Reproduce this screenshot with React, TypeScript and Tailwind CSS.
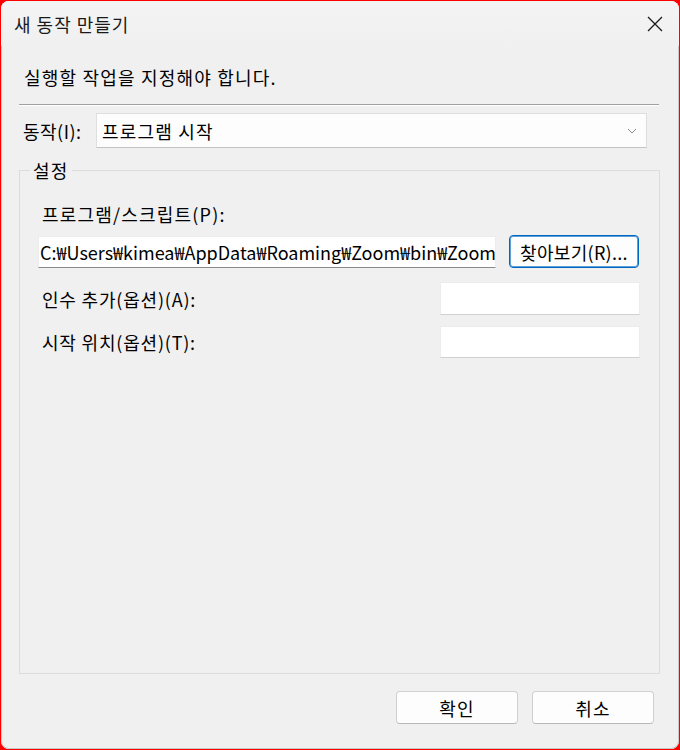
import React from "react";

const font = "font-['Malgun_Gothic','Noto_Sans_CJK_KR',sans-serif]";

function Chevron() {
  return (
    <svg width="10" height="6" viewBox="0 0 10 6" fill="none">
      <path d="M1 1L5 5L9 1" stroke="#8a8a8a" strokeWidth="1" />
    </svg>
  );
}

function CloseIcon() {
  return (
    <svg width="16" height="16" viewBox="0 0 16 16" fill="none">
      <path d="M1 1L15 15M15 1L1 15" stroke="#1a1a1a" strokeWidth="1.3" />
    </svg>
  );
}

export default function App() {
  return (
    <div className={`w-[680px] h-[750px] bg-[#ff0000] p-px ${font} text-[18px] text-black`}>
      <div className="w-full h-full bg-[#f0f0f0] rounded-[8px] flex flex-col overflow-hidden shadow-[inset_0_0_0_1px_#c8c8c8]">
        {/* title bar */}
        <div className="h-[45px] flex items-center justify-between pl-[13px] pr-[16px] bg-gradient-to-b from-[#f4f4f4] to-[#f0f0f0] shrink-0">
          <span className="text-[18px] tracking-[1px] text-[#1a1a1a] leading-[24px] mt-[1px]">새 동작 만들기</span>
          <CloseIcon />
        </div>

        <div className="flex-1 flex flex-col pl-[18px] pr-[20px] tracking-[1.2px]">
          <p className="mt-[19px] pl-[5px] leading-[24px] h-[24px]">실행할 작업을 지정해야 합니다.</p>

          <div className="mt-[15px] h-[2px] border-t border-t-[#a0a0a0] border-b border-b-white w-[640px]" />

          <div className="mt-[7px] flex items-center">
            <span className="w-[77px] pl-[4px] leading-[24px] tracking-[0.5px]">동작(I):</span>
            <div className="w-[551px] h-[35px] bg-[#fdfdfd] border border-[#dedede] border-b-[#c4c4c4] flex items-center justify-between pl-[5px] pr-[9px]">
              <span className="leading-[24px]">프로그램 시작</span>
              <Chevron />
            </div>
          </div>

          <fieldset className="mt-[10px] h-[516px] w-[641px] border border-[#dcdcdc]">
            <legend className="ml-[10px] px-[3px] leading-[24px]">설정</legend>

            <div className="pl-[18px] pr-[19px]">
              <div className="mt-[20px] pl-[4px] leading-[24px]">프로그램/스크립트(P):</div>

              <div className="mt-[9px] flex items-center">
                <div className="w-[458px] h-[32px] bg-white border border-[#ececec] border-b-[#8a8a8a] flex items-center pl-[1px] overflow-hidden whitespace-nowrap">
                  <span className="leading-[24px] tracking-normal">C:₩Users₩kimea₩AppData₩Roaming₩Zoom₩bin₩Zoom.exe</span>
                </div>
                <button className="ml-[13px] w-[130px] h-[33px] bg-[#fdfdfd] rounded-[4px] border border-[#0067c0] shadow-[inset_0_0_0_1px_#5d9fd8] flex items-center justify-center leading-[24px] tracking-[0.3px]">
                  찾아보기(R)...
                </button>
              </div>

              <div className="mt-[14px] flex items-center justify-between">
                <span className="pl-[4px] leading-[24px] tracking-[0.8px]">인수 추가(옵션)(A):</span>
                <div className="w-[200px] h-[33px] bg-white border border-[#ececec] border-b-[#d0d0d0]" />
              </div>

              <div className="mt-[11px] flex items-center justify-between">
                <span className="pl-[4px] leading-[24px] tracking-[0.8px]">시작 위치(옵션)(T):</span>
                <div className="w-[200px] h-[32px] bg-white border border-[#ececec] border-b-[#d0d0d0]" />
              </div>
            </div>
          </fieldset>

          <div className="mt-[17px] flex justify-end gap-[14px] pr-[5px]">
            <button className="w-[122px] h-[33px] bg-[#fdfdfd] rounded-[4px] border border-[#d0d0d0] border-b-[#b8b8b8] flex items-center justify-center leading-[24px]">
              확인
            </button>
            <button className="w-[122px] h-[33px] bg-[#fdfdfd] rounded-[4px] border border-[#d0d0d0] border-b-[#b8b8b8] flex items-center justify-center leading-[24px]">
              취소
            </button>
          </div>
        </div>
      </div>
    </div>
  );
}
